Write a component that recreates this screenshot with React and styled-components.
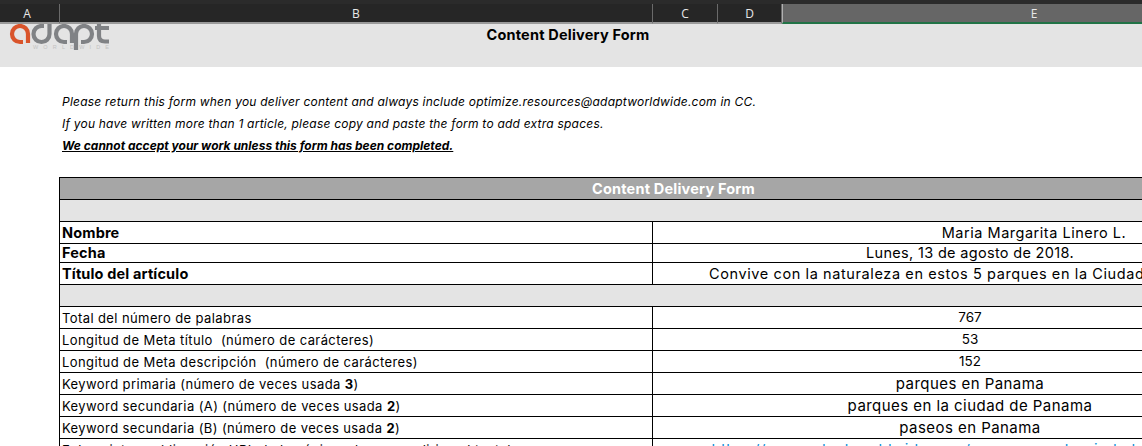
import React from 'react';
import styled, { createGlobalStyle } from 'styled-components';

const GlobalStyle = createGlobalStyle`
  html, body {
    margin: 0;
    padding: 0;
    background: #fff;
  }
`;

const sheetFont = `Inter, "Open Sans", "Liberation Sans", sans-serif`;

const columns = [
  { label: 'A', width: 60 },
  { label: 'B', width: 593 },
  { label: 'C', width: 65 },
  { label: 'D', width: 64 },
  { label: 'E', width: 503, selected: true },
];

const App = () => {
  return (
    <Page>
      <GlobalStyle />
      <ColumnBar>
        {columns.map((col, i) => (
          <ColumnHead key={col.label} $width={col.width} $selected={col.selected} $first={i === 0}>
            {col.label}
          </ColumnHead>
        ))}
      </ColumnBar>

      <Band>
        <Logo viewBox="0 0 112 30" aria-label="adapt worldwide">
          <g fill="none" strokeWidth="4.2" stroke="#808285">
            <path stroke="#d9542b" d="M23 18 H20 A8 8 0 1 1 28 10 V19" />
            <path d="M49.500 -4 V10 A8 8 0 1 1 41.500 2 H44" />
            <path d="M67 18 H64 A8 8 0 1 1 72 10 V19" />
            <path d="M76 26 V10 A8 8 0 1 1 84 18 H81" />
            <path d="M99 -4 V12 Q99 17.500 105 17.500 H109 M95 4 H109" />
          </g>
          <LogoCaption x="33" y="25" textLength="76">WORLDWIDE</LogoCaption>
        </Logo>
        <BandTitle>Content Delivery Form</BandTitle>
      </Band>

      <Notes>
        <Note>Please return this form when you deliver content and always include optimize.resources@adaptworldwide.com in CC.</Note>
        <Note>If you have written more than 1 article, please copy and paste the form to add extra spaces.</Note>
        <Note $strong>We cannot accept your work unless this form has been completed.</Note>
      </Notes>

      <Table>
        <TitleRow>Content Delivery Form</TitleRow>
        <SpacerRow />
        <Row>
          <Label $big>Nombre</Label>
          <Value $big $shift={128} $spacing={0.52}>Maria Margarita Linero L.</Value>
        </Row>
        <Row $height={19}>
          <Label $big>Fecha</Label>
          <Value $big $spacing={0.32}>Lunes, 13 de agosto de 2018.</Value>
        </Row>
        <Row>
          <Label $big>Título del artículo</Label>
          <Value $big $spacing={0.6}>Convive con la naturaleza en estos 5 parques en la Ciudad de Panama</Value>
        </Row>
        <SpacerRow />
        <Row>
          <Label>Total del número de palabras</Label>
          <Value $number>767</Value>
        </Row>
        <Row>
          <Label>Longitud de Meta título&nbsp; (número de carácteres)</Label>
          <Value $number>53</Value>
        </Row>
        <Row>
          <Label>Longitud de Meta descripción&nbsp; (número de carácteres)</Label>
          <Value $number>152</Value>
        </Row>
        <Row>
          <Label>Keyword primaria (número de veces usada <b>3</b>)</Label>
          <Value>parques en Panama</Value>
        </Row>
        <Row>
          <Label>Keyword secundaria (A) (número de veces usada <b>2</b>)</Label>
          <Value>parques en la ciudad de Panama</Value>
        </Row>
        <Row>
          <Label>Keyword secundaria (B) (número de veces usada <b>2</b>)</Label>
          <Value>paseos en Panama</Value>
        </Row>
        <Row>
          <Label>Enlace interno (dirección URL de la página a la que se dirige el texto)</Label>
          <Value $link>https://www.adaptworldwide.com/parques-en-la-ciudad-de-panama</Value>
        </Row>
      </Table>
    </Page>
  );
};

export default App;

const Page = styled.div`
  width: 1142px;
  height: 446px;
  overflow: hidden;
  background: #fff;
  color: #000;
  font-family: ${sheetFont};
`;

const ColumnBar = styled.div`
  display: flex;
  width: 1285px;
  height: 24px;
  box-sizing: border-box;
  padding-top: 4px;
  background: #262626;
  box-shadow: inset 0 4px 0 #2b2b2b;
`;

const ColumnHead = styled.div`
  flex: none;
  box-sizing: border-box;
  width: ${(p) => p.$width}px;
  display: flex;
  align-items: center;
  justify-content: center;
  padding-right: ${(p) => (p.$first ? 5 : 0)}px;
  font-family: "Open Sans", sans-serif;
  font-size: 12px;
  color: #e8e8e8;
  background: ${(p) => (p.$selected ? '#666666' : 'transparent')};
  border-left: ${(p) => (p.$selected ? '1px solid #b0b0b0' : 'none')};
  border-right: ${(p) => (p.$selected ? 'none' : '1px solid #6a6a6a')};
  border-bottom: 2px solid ${(p) => (p.$selected ? '#217346' : '#9a9a9a')};
`;

const Band = styled.div`
  position: relative;
  width: 1136px;
  padding-right: 6px;
  height: 43px;
  overflow: hidden;
  background: #e4e4e4;
  text-align: center;
`;

const Logo = styled.svg`
  position: absolute;
  left: 0;
  top: 0;
  width: 112px;
  height: 30px;
`;

const LogoCaption = styled.text`
  font-family: "Liberation Sans", sans-serif;
  font-size: 5.500px;
  fill: #c2c2c2;
`;

const BandTitle = styled.div`
  padding-top: 2px;
  line-height: 17px;
  font-size: 14.500px;
  font-weight: 700;
  letter-spacing: 0.2px;
`;

const Notes = styled.div`
  padding: 24px 0 20px 62px;
`;

const Note = styled.div`
  height: 22px;
  line-height: 21px;
  white-space: nowrap;
  font-size: 12px;
  font-style: italic;
  font-weight: ${(p) => (p.$strong ? 700 : 400)};
  letter-spacing: ${(p) => (p.$strong ? 0 : 0.22)}px;
  text-decoration: ${(p) => (p.$strong ? 'underline' : 'none')};
`;

const Table = styled.div`
  width: 1228px;
  margin-left: 59px;
  box-sizing: border-box;
  border-top: 1px solid #000;
  border-left: 1px solid #000;
`;

const TitleRow = styled.div`
  height: 21px;
  line-height: 21px;
  border-bottom: 1px solid #000;
  background: #a6a6a6;
  color: #fff;
  text-align: center;
  font-size: 14.500px;
  font-weight: 700;
  letter-spacing: 0.2px;
`;

const SpacerRow = styled.div`
  height: 21px;
  border-bottom: 1px solid #000;
  background: #e4e4e4;
`;

const Row = styled.div`
  display: grid;
  grid-template-columns: 593px 1fr;
  height: ${(p) => p.$height || 22}px;
  line-height: ${(p) => (p.$height || 22) - 1}px;
  box-sizing: border-box;
  border-bottom: 1px solid #000;
`;

const Label = styled.div`
  white-space: pre;
  padding-left: 2px;
  padding-top: ${(p) => (p.$big ? 0 : 1)}px;
  border-right: 1px solid #000;
  font-size: ${(p) => (p.$big ? 14.5 : 13)}px;
  font-weight: ${(p) => (p.$big ? 700 : 400)};
  letter-spacing: ${(p) => (p.$big ? 0.15 : 0.4)}px;
`;

const Value = styled.div`
  white-space: nowrap;
  text-align: center;
  padding-left: ${(p) => p.$shift || 0}px;
  font-size: ${(p) => (p.$big ? 14.5 : p.$number ? 13.5 : 15)}px;
  letter-spacing: ${(p) => p.$spacing ?? (p.$number ? 0 : 0.45)}px;
  color: ${(p) => (p.$link ? '#0a8fd8' : '#000')};
`;
